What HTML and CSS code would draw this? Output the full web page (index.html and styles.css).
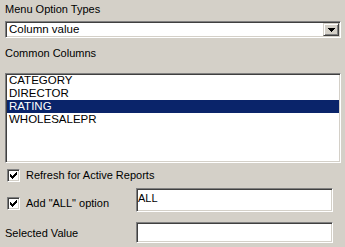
FILE: index.html
```html
<!DOCTYPE html>
<html>
<head>
<meta charset="utf-8">
<link rel="stylesheet" href="styles.css">
</head>
<body>
<div class="panel">
  <div class="label first">Menu Option Types</div>
  <div class="combo">
    <span class="combo-text">Column value</span>
    <span class="combo-btn"><svg width="7" height="4" viewBox="0 0 7 4" shape-rendering="crispEdges"><path d="M0 0h7v1h-7z M1 1h5v1h-5z M2 2h3v1h-3z M3 3h1v1h-1z" fill="#000"/></svg></span>
  </div>
  <div class="label second">Common Columns</div>
  <div class="list">
    <div class="item">CATEGORY</div>
    <div class="item">DIRECTOR</div>
    <div class="item selected">RATING</div>
    <div class="item">WHOLESALEPR</div>
  </div>
  <div class="row check-row">
    <span class="check"><svg width="7" height="7" viewBox="0 0 7 7" shape-rendering="crispEdges"><path d="M0 2h1v3h-1z M1 3h1v3h-1z M2 4h1v3h-1z M3 3h1v3h-1z M4 2h1v3h-1z M5 1h1v3h-1z M6 0h1v3h-1z" fill="#000"/></svg></span>
    <span class="check-label">Refresh for Active Reports</span>
  </div>
  <div class="row field-row">
    <div class="field-left top">
      <span class="check"><svg width="7" height="7" viewBox="0 0 7 7" shape-rendering="crispEdges"><path d="M0 2h1v3h-1z M1 3h1v3h-1z M2 4h1v3h-1z M3 3h1v3h-1z M4 2h1v3h-1z M5 1h1v3h-1z M6 0h1v3h-1z" fill="#000"/></svg></span>
      <span class="check-label">Add "ALL" option</span>
    </div>
    <div class="input">ALL</div>
  </div>
  <div class="row field-row second-field">
    <div class="field-left">
      <span class="plain-label">Selected Value</span>
    </div>
    <div class="input"></div>
  </div>
</div>
</body>
</html>
```
FILE: styles.css
```css
html, body {
  margin: 0;
  padding: 0;
  background: #d4d0c8;
}
.panel {
  width: 345px;
  height: 247px;
  box-sizing: border-box;
  padding: 2px 4px 0 5px;
  font-family: "Liberation Sans", Arial, sans-serif;
  font-size: 11px;
  color: #000;
  display: flex;
  flex-direction: column;
}
.label {
  height: 14px;
  line-height: 14px;
  flex: none;
}
.first { margin-bottom: 5px; }
.second { margin-top: 8px; margin-bottom: 13px; }
.combo, .list, .input, .check {
  box-sizing: border-box;
  background: #fff;
  border-top: 1px solid #808080;
  border-left: 1px solid #808080;
  border-right: 1px solid #fff;
  border-bottom: 1px solid #fff;
  box-shadow: inset 1px 1px 0 #404040, inset -1px -1px 0 #d4d0c8;
}
.combo {
  height: 17px;
  flex: none;
  display: flex;
  align-items: stretch;
  padding: 1px 1px 1px 2px;
}
.combo-text {
  flex: 1;
  line-height: 13px;
  padding-left: 1px;
  font-size: 11.5px;
}
.combo-btn {
  width: 16px;
  box-sizing: border-box;
  background: #d4d0c8;
  border-top: 1px solid #d4d0c8;
  border-left: 1px solid #d4d0c8;
  border-right: 1px solid #404040;
  border-bottom: 1px solid #404040;
  box-shadow: inset 1px 1px 0 #fff, inset -1px -1px 0 #808080;
  display: flex;
  align-items: center;
  justify-content: center;
}
.combo-btn svg { display: block; }
.list {
  height: 90px;
  flex: none;
  padding: 0 1px;
}
.item {
  height: 13px;
  line-height: 13px;
  padding-left: 2px;
  font-size: 11.5px;
}
.item.selected {
  background: #0a246a;
  color: #fff;
}
.row {
  display: flex;
  align-items: center;
  flex: none;
}
.check-row {
  margin-top: 6px;
  height: 13px;
}
.check {
  width: 13px;
  height: 13px;
  flex: none;
  display: flex;
  align-items: center;
  justify-content: center;
  margin-left: 2px;
  margin-right: 6px;
}
.check svg { display: block; }
.check-label { line-height: 13px; }
.field-row {
  margin-top: 6px;
  height: 24px;
}
.second-field {
  margin-top: 10px;
  height: 21px;
}
.field-left {
  width: 131px;
  height: 100%;
  display: flex;
  align-items: center;
}
.field-left.top {
  align-items: flex-start;
  padding-top: 9px;
  box-sizing: border-box;
}
.input {
  width: 197px;
  height: 100%;
  padding: 2px 1px;
  line-height: 14px;
}
```
